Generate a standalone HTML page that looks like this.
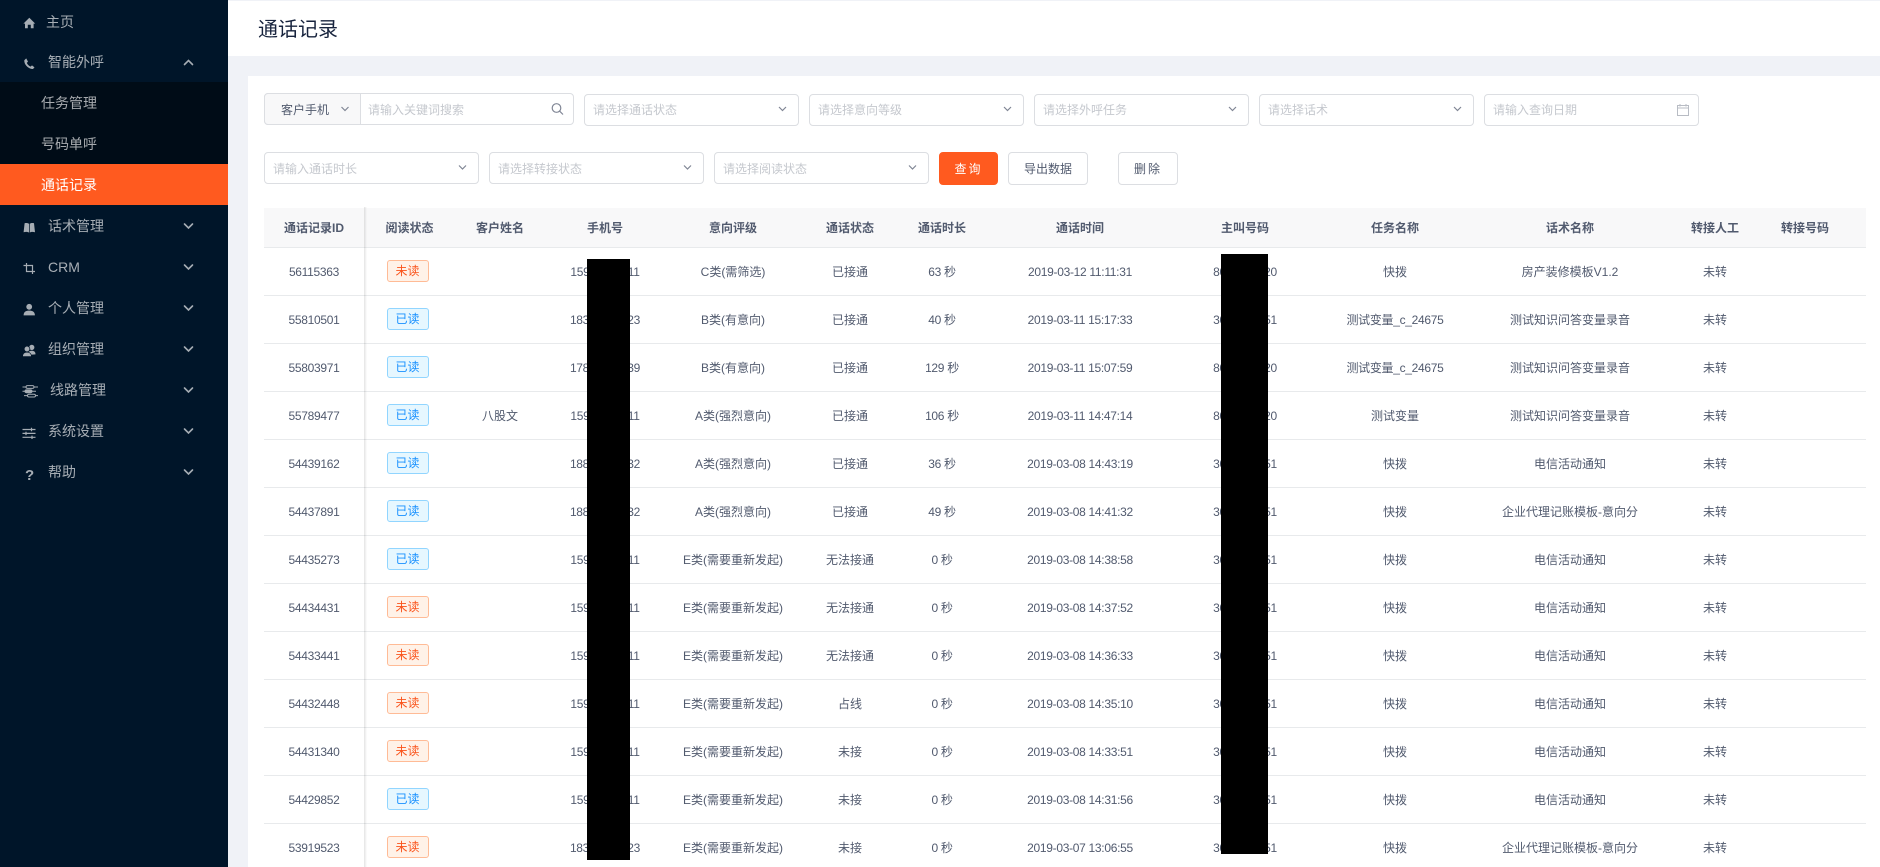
<!DOCTYPE html>
<html lang="zh"><head><meta charset="utf-8"><title>通话记录</title>
<style>
*{box-sizing:border-box}
html,body{margin:0;padding:0;width:1880px;height:867px;overflow:hidden;background:#f0f2f7;font-family:"Liberation Sans","Noto Sans CJK SC",sans-serif;font-size:12px;color:#515a6e}
#wrap{position:relative;width:1880px;height:867px;overflow:hidden;contain:paint}
.abs,.side,.side div,.box,.btn,svg.i{position:absolute}
.side{left:0;top:0;width:228px;height:867px;background:#001529;color:rgba(255,255,255,.65);font-size:14px}
.side .t{line-height:20px;white-space:nowrap}
.sub{left:0;top:82px;width:228px;height:82px;background:#000c17}
.act{left:0;top:164px;width:228px;height:41px;background:#ff5a1f}
.head{position:absolute;left:228px;top:1px;width:1652px;height:55px;background:#fff;box-shadow:0 -1px 0 #f0f2f7}
.title{position:absolute;left:258px;top:16px;font-size:20px;line-height:29px;color:#17233d}
.card{position:absolute;left:248px;top:76px;width:1632px;height:791px;background:#fff}
.box{height:32px;width:215px;border:1px solid #dcdee2;border-radius:4px;background:#fff;color:#c5c8ce;line-height:31px;padding-left:8px;white-space:nowrap}
.btn{height:33px;top:152px;border:1px solid #dcdee2;border-radius:4px;text-align:center;line-height:33px;background:#fff;color:#515a6e}
table{position:absolute;left:264px;top:208px;width:1602px;border-collapse:separate;border-spacing:0;table-layout:fixed}
th{height:40px;background:#f8f8f9;font-weight:700;border-bottom:1px solid #e8eaec;padding:0;text-align:center;color:#515a6e}
td{height:48px;border-bottom:1px solid #e8eaec;padding:0;text-align:center;white-space:nowrap;color:#515a6e}
.n{letter-spacing:-.3px}
.tg{display:inline-block;width:42px;height:22px;line-height:21px;border-radius:3px;border:1px solid;position:relative;left:-2px;top:-1px;vertical-align:middle}
.r{background:#fff2e8;border-color:#ffbb96;color:#fa541c}
.b{background:#e6f7ff;border-color:#91d5ff;color:#1890ff}
</style></head><body><div id="wrap">
<div class="head"></div>
<div class="title">通话记录</div>
<div class="card"></div>

<div class="side">
<div class="sub"></div><div class="act"></div>
<div class="t" style="left:46px;top:12px">主页</div>
<div class="t" style="left:48px;top:52px">智能外呼</div>
<div class="t" style="left:41px;top:93px">任务管理</div>
<div class="t" style="left:41px;top:134px">号码单呼</div>
<div class="t" style="left:41px;top:175px;color:#fff">通话记录</div>
<div class="t" style="left:48px;top:216px">话术管理</div>
<div class="t" style="left:48px;top:257px">CRM</div>
<div class="t" style="left:48px;top:298px">个人管理</div>
<div class="t" style="left:48px;top:339px">组织管理</div>
<div class="t" style="left:50px;top:380px">线路管理</div>
<div class="t" style="left:48px;top:421px">系统设置</div>
<div class="t" style="left:48px;top:462px">帮助</div>
</div>

<svg class="i" style="left:0;top:0" width="228" height="500" fill="none">
<g fill="#a6adb4">
<path d="M29.3 17.8 35.2 23.6 33.6 23.6V28.2H30.8V24.8H27.8V28.2H25V23.6H23.4Z"/>
<path d="M24.3 60.2 26.2 58.4 28 61.6 26.8 62.9C27.6 64.8 28.9 65.9 30.6 66.6L32 65.4 34.5 67.4 33 69C28.8 69 24 64.8 24.3 60.2Z"/>
<path d="M24.6 223.2C26.4 222.8 28 223 29 223.8V232.6C28 231.9 26 231.6 23.6 232.2ZM34 223.2C32.2 222.8 30.6 223 29.7 223.8V232.6C30.6 231.9 32.6 231.6 35 232.2Z"/>
<circle cx="29.2" cy="306.8" r="2.9"/><path d="M23.6 315.4C23.6 311.6 26 310.6 29.2 310.6S34.9 311.6 34.9 315.4Z"/>
<circle cx="31.8" cy="347.4" r="2.6"/><path d="M27.5 355C27.5 351.8 29.5 350.8 31.8 350.8S35.5 351.8 35.5 354.4Z"/>
<circle cx="27" cy="349" r="2.8" stroke="#001529" stroke-width=".7"/><path d="M22.6 356.6C22.6 353.4 24.4 352.2 27 352.2S31.4 353.4 31.4 356.6Z" stroke="#001529" stroke-width=".7"/>
</g>
<g stroke="#a6adb4" stroke-width="1.2">
<path d="M23.500 265.500H32.500V274M26.500 263V271.500H35"/>
<path d="M22.5 387H38M22.5 391.3H36M24 395.6H38" stroke-width="1"/>
<rect x="26" y="385.6" width="8" height="2.8" rx="1.4" fill="#001529" stroke-width="1"/>
<rect x="25" y="389.9" width="7" height="2.8" rx="1.4" fill="#a6adb4" stroke-width="1"/>
<rect x="27.5" y="394.2" width="8" height="2.8" rx="1.4" fill="#001529" stroke-width="1"/>
<path d="M22.5 429.5H35.5M22.5 433.4H35.5M22.5 437.3H35.5"/>
<path d="M31.5 427.8V431.2M26 431.7V435.1M32 435.6V439"/>
</g>
<text x="25" y="480" font-family="Liberation Sans" font-weight="700" font-size="15" fill="#a6adb4">?</text>
<g stroke="#a6adb4" stroke-width="1.6" stroke-linecap="round">
<path d="M184.5 64.5 188.5 60.5 192.5 64.5"/>
<path d="M184.5 224 188.5 228 192.5 224"/>
<path d="M184.5 265 188.5 269 192.5 265"/>
<path d="M184.5 306 188.5 310 192.5 306"/>
<path d="M184.5 347 188.5 351 192.5 347"/>
<path d="M184.5 388 188.5 392 192.5 388"/>
<path d="M184.5 429 188.5 433 192.5 429"/>
<path d="M184.5 470 188.5 474 192.5 470"/>
</g>
</svg>

<div class="box" style="left:264px;top:93px;width:310px;padding-left:103px;line-height:32px">请输入关键词搜索</div>
<div class="abs" style="left:264px;top:93px;width:97px;height:32px;background:#f8f8f9;border:1px solid #dcdee2;border-radius:4px 0 0 4px;color:#515a6e;line-height:32px;padding-left:16px">客户手机</div>
<div class="box" style="left:584px;top:94px">请选择通话状态</div>
<div class="box" style="left:809px;top:94px">请选择意向等级</div>
<div class="box" style="left:1034px;top:94px">请选择外呼任务</div>
<div class="box" style="left:1259px;top:94px">请选择话术</div>
<div class="box" style="left:1484px;top:94px">请输入查询日期</div>
<div class="box" style="left:264px;top:152px;line-height:33px">请输入通话时长</div>
<div class="box" style="left:489px;top:152px;line-height:33px">请选择转接状态</div>
<div class="box" style="left:714px;top:152px;line-height:33px">请选择阅读状态</div>
<div class="btn" style="left:939px;width:59px;background:#ff5a1f;border-color:#ff5a1f;color:#fff;letter-spacing:2px">查询</div>
<div class="btn" style="left:1008px;width:80px">导出数据</div>
<div class="btn" style="left:1118px;width:60px;letter-spacing:2px">删除</div>

<svg class="i" style="left:0;top:0;z-index:2" width="1880" height="200" fill="none" stroke="#808695" stroke-width="1.2">
<path d="M341.5 107 345 110.500 348.500 107"/>
<path d="M779 107 782.500 110.500 786 107"/>
<path d="M1004 107 1007.500 110.500 1011 107"/>
<path d="M1229 107 1232.500 110.500 1236 107"/>
<path d="M1454 107 1457.500 110.500 1461 107"/>
<path d="M459 165.500 462.500 169 466 165.500"/>
<path d="M684 165.500 687.500 169 691 165.500"/>
<path d="M909 165.500 912.500 169 916 165.500"/>
<circle cx="556.500" cy="108" r="4.300"/><path d="M559.700 111.200 563 114.500"/>
<path d="M1677.500 105.500H1688.500V115.500H1677.500ZM1677.500 108H1688.500M1680 104V106.500M1686 104V106.500" stroke="#b8bcc4" stroke-width="1"/>
</svg>

<table>
<colgroup><col style="width:100px"><col style="width:91px"><col style="width:90px"><col style="width:120px"><col style="width:136px"><col style="width:98px"><col style="width:86px"><col style="width:190px"><col style="width:140px"><col style="width:160px"><col style="width:190px"><col style="width:100px"><col style="width:80px"><col style="width:21px"></colgroup>
<tr><th>通话记录ID</th><th>阅读状态</th><th>客户姓名</th><th>手机号</th><th>意向评级</th><th>通话状态</th><th>通话时长</th><th>通话时间</th><th>主叫号码</th><th>任务名称</th><th>话术名称</th><th>转接人工</th><th>转接号码</th><th></th></tr>
<tr><td class="n">56115363</td><td><span class="tg r">未读</span></td><td></td><td class="n">15900000011</td><td>C类(需筛选)</td><td>已接通</td><td class="n">63 秒</td><td class="n">2019-03-12 11:11:31</td><td class="n">8000000020</td><td>快拨</td><td>房产装修模板V1.2</td><td>未转</td><td></td><td></td></tr>
<tr><td class="n">55810501</td><td><span class="tg b">已读</span></td><td></td><td class="n">18300000023</td><td>B类(有意向)</td><td>已接通</td><td class="n">40 秒</td><td class="n">2019-03-11 15:17:33</td><td class="n">3000000051</td><td class="n">测试变量_c_24675</td><td>测试知识问答变量录音</td><td>未转</td><td></td><td></td></tr>
<tr><td class="n">55803971</td><td><span class="tg b">已读</span></td><td></td><td class="n">17800000039</td><td>B类(有意向)</td><td>已接通</td><td class="n">129 秒</td><td class="n">2019-03-11 15:07:59</td><td class="n">8000000020</td><td class="n">测试变量_c_24675</td><td>测试知识问答变量录音</td><td>未转</td><td></td><td></td></tr>
<tr><td class="n">55789477</td><td><span class="tg b">已读</span></td><td>八股文</td><td class="n">15900000011</td><td>A类(强烈意向)</td><td>已接通</td><td class="n">106 秒</td><td class="n">2019-03-11 14:47:14</td><td class="n">8000000020</td><td>测试变量</td><td>测试知识问答变量录音</td><td>未转</td><td></td><td></td></tr>
<tr><td class="n">54439162</td><td><span class="tg b">已读</span></td><td></td><td class="n">18800000032</td><td>A类(强烈意向)</td><td>已接通</td><td class="n">36 秒</td><td class="n">2019-03-08 14:43:19</td><td class="n">3000000051</td><td>快拨</td><td>电信活动通知</td><td>未转</td><td></td><td></td></tr>
<tr><td class="n">54437891</td><td><span class="tg b">已读</span></td><td></td><td class="n">18800000032</td><td>A类(强烈意向)</td><td>已接通</td><td class="n">49 秒</td><td class="n">2019-03-08 14:41:32</td><td class="n">3000000051</td><td>快拨</td><td>企业代理记账模板-意向分</td><td>未转</td><td></td><td></td></tr>
<tr><td class="n">54435273</td><td><span class="tg b">已读</span></td><td></td><td class="n">15900000011</td><td>E类(需要重新发起)</td><td>无法接通</td><td class="n">0 秒</td><td class="n">2019-03-08 14:38:58</td><td class="n">3000000051</td><td>快拨</td><td>电信活动通知</td><td>未转</td><td></td><td></td></tr>
<tr><td class="n">54434431</td><td><span class="tg r">未读</span></td><td></td><td class="n">15900000011</td><td>E类(需要重新发起)</td><td>无法接通</td><td class="n">0 秒</td><td class="n">2019-03-08 14:37:52</td><td class="n">3000000051</td><td>快拨</td><td>电信活动通知</td><td>未转</td><td></td><td></td></tr>
<tr><td class="n">54433441</td><td><span class="tg r">未读</span></td><td></td><td class="n">15900000011</td><td>E类(需要重新发起)</td><td>无法接通</td><td class="n">0 秒</td><td class="n">2019-03-08 14:36:33</td><td class="n">3000000051</td><td>快拨</td><td>电信活动通知</td><td>未转</td><td></td><td></td></tr>
<tr><td class="n">54432448</td><td><span class="tg r">未读</span></td><td></td><td class="n">15900000011</td><td>E类(需要重新发起)</td><td>占线</td><td class="n">0 秒</td><td class="n">2019-03-08 14:35:10</td><td class="n">3000000051</td><td>快拨</td><td>电信活动通知</td><td>未转</td><td></td><td></td></tr>
<tr><td class="n">54431340</td><td><span class="tg r">未读</span></td><td></td><td class="n">15900000011</td><td>E类(需要重新发起)</td><td>未接</td><td class="n">0 秒</td><td class="n">2019-03-08 14:33:51</td><td class="n">3000000051</td><td>快拨</td><td>电信活动通知</td><td>未转</td><td></td><td></td></tr>
<tr><td class="n">54429852</td><td><span class="tg b">已读</span></td><td></td><td class="n">15900000011</td><td>E类(需要重新发起)</td><td>未接</td><td class="n">0 秒</td><td class="n">2019-03-08 14:31:56</td><td class="n">3000000051</td><td>快拨</td><td>电信活动通知</td><td>未转</td><td></td><td></td></tr>
<tr><td class="n">53919523</td><td><span class="tg r">未读</span></td><td></td><td class="n">18300000023</td><td>E类(需要重新发起)</td><td>未接</td><td class="n">0 秒</td><td class="n">2019-03-07 13:06:55</td><td class="n">3000000051</td><td>快拨</td><td>企业代理记账模板-意向分</td><td>未转</td><td></td><td></td></tr>
</table>

<div class="abs" style="left:364px;top:207px;width:3px;height:660px;background:linear-gradient(90deg,rgba(0,0,0,.11),rgba(0,0,0,0))"></div>
<div class="abs" style="left:587px;top:259px;width:43px;height:601px;background:#000"></div>
<div class="abs" style="left:1221px;top:254px;width:47px;height:600px;background:#000"></div>
</div></body></html>
